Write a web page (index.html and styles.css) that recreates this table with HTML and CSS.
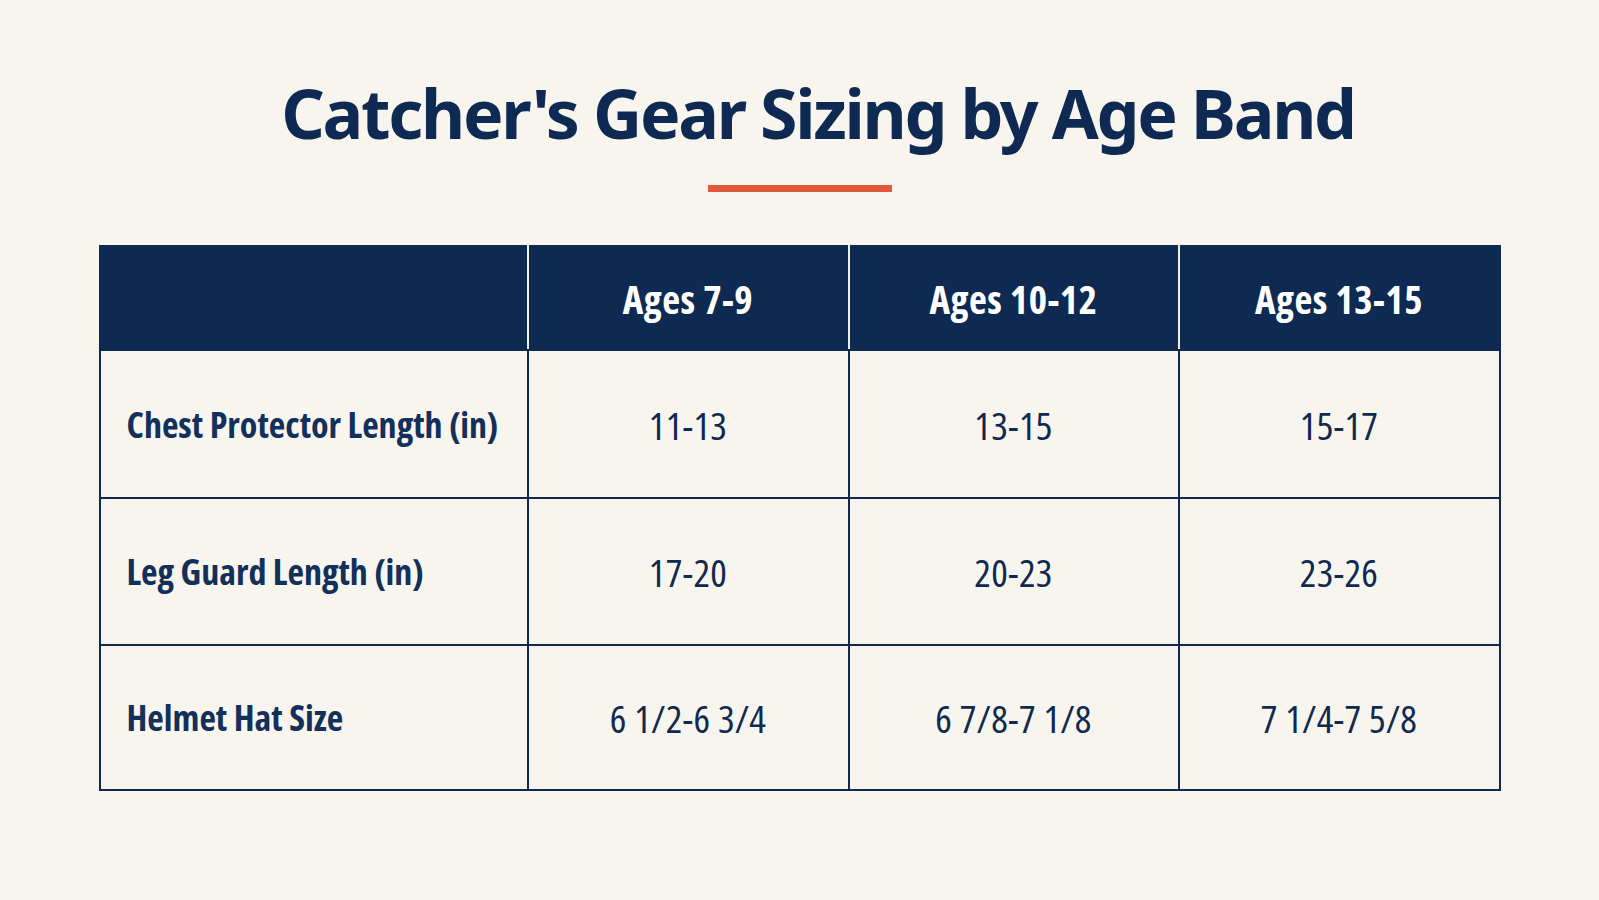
FILE: index.html
```
<!DOCTYPE html>
<html lang="en">
<head>
    <meta charset="UTF-8">
    <meta name="viewport" content="width=device-width, initial-scale=1.0">
    <title>Catcher's Gear Sizing by Age Band</title>
    <link rel="stylesheet" href="styles.css">
</head>
<body>
    <div class="page">
        <h1 class="title">Catcher's Gear Sizing by Age Band</h1>
        <div class="accent"></div>

        <table class="sizing">
            <colgroup>
                <col class="col-label">
                <col class="col-a">
                <col class="col-b">
                <col class="col-c">
            </colgroup>
            <thead>
                <tr>
                    <th></th>
                    <th>Ages 7-9</th>
                    <th>Ages 10-12</th>
                    <th>Ages 13-15</th>
                </tr>
            </thead>
            <tbody>
                <tr class="first">
                    <td class="label">Chest Protector Length (in)</td>
                    <td>11-13</td>
                    <td>13-15</td>
                    <td>15-17</td>
                </tr>
                <tr>
                    <td class="label">Leg Guard Length (in)</td>
                    <td>17-20</td>
                    <td>20-23</td>
                    <td>23-26</td>
                </tr>
                <tr class="last">
                    <td class="label">Helmet Hat Size</td>
                    <td>6 1/2-6 3/4</td>
                    <td>6 7/8-7 1/8</td>
                    <td>7 1/4-7 5/8</td>
                </tr>
            </tbody>
        </table>
    </div>
</body>
</html>
```
FILE: styles.css
```
body {
    margin: 0;
    background: #f8f5ef;
    font-family: "Open Sans", "Noto Sans", sans-serif;
    font-stretch: condensed;
    color: #10294f;
}

.page {
    display: flex;
    flex-direction: column;
    align-items: center;
    padding-top: 71px;
}

.title {
    margin: 0 0 0 37px;
    font-family: "Noto Sans", "Open Sans", sans-serif;
    font-stretch: normal;
    font-size: 68px;
    line-height: 84px;
    font-weight: 700;
    letter-spacing: -2.3px;
    color: #0f2a52;
}

.accent {
    width: 184px;
    height: 7px;
    margin-top: 30px;
    background: #df5a3c;
}

.sizing {
    margin-top: 53px;
    width: 1400px;
    border-collapse: collapse;
    table-layout: fixed;
    border: 2px solid #10294f;
}

.col-label { width: 428px; }
.col-a { width: 321px; }
.col-b { width: 330px; }
.col-c { width: 321px; }

.sizing th {
    height: 102px;
    padding: 0;
    background: #0e2a52;
    color: #ffffff;
    font-size: 39px;
    font-weight: 700;
    letter-spacing: 0.5px;
    text-align: center;
    border-left: 2px solid #f3efe6;
    border-bottom: 2px solid #10294f;
}

.sizing th:first-child {
    border-left: none;
}

.sizing td {
    height: 145px;
    padding: 0;
    font-size: 39px;
    font-weight: 500;
    letter-spacing: 0.3px;
    text-align: center;
    border: 2px solid #10294f;
}

.sizing tr.first td {
    height: 146px;
}

.sizing tr.last td {
    height: 143px;
}

.sizing td.label {
    text-align: left;
    padding-left: 26px;
    font-size: 36px;
    font-weight: 700;
    letter-spacing: 0;
    color: #12305a;
}
```
